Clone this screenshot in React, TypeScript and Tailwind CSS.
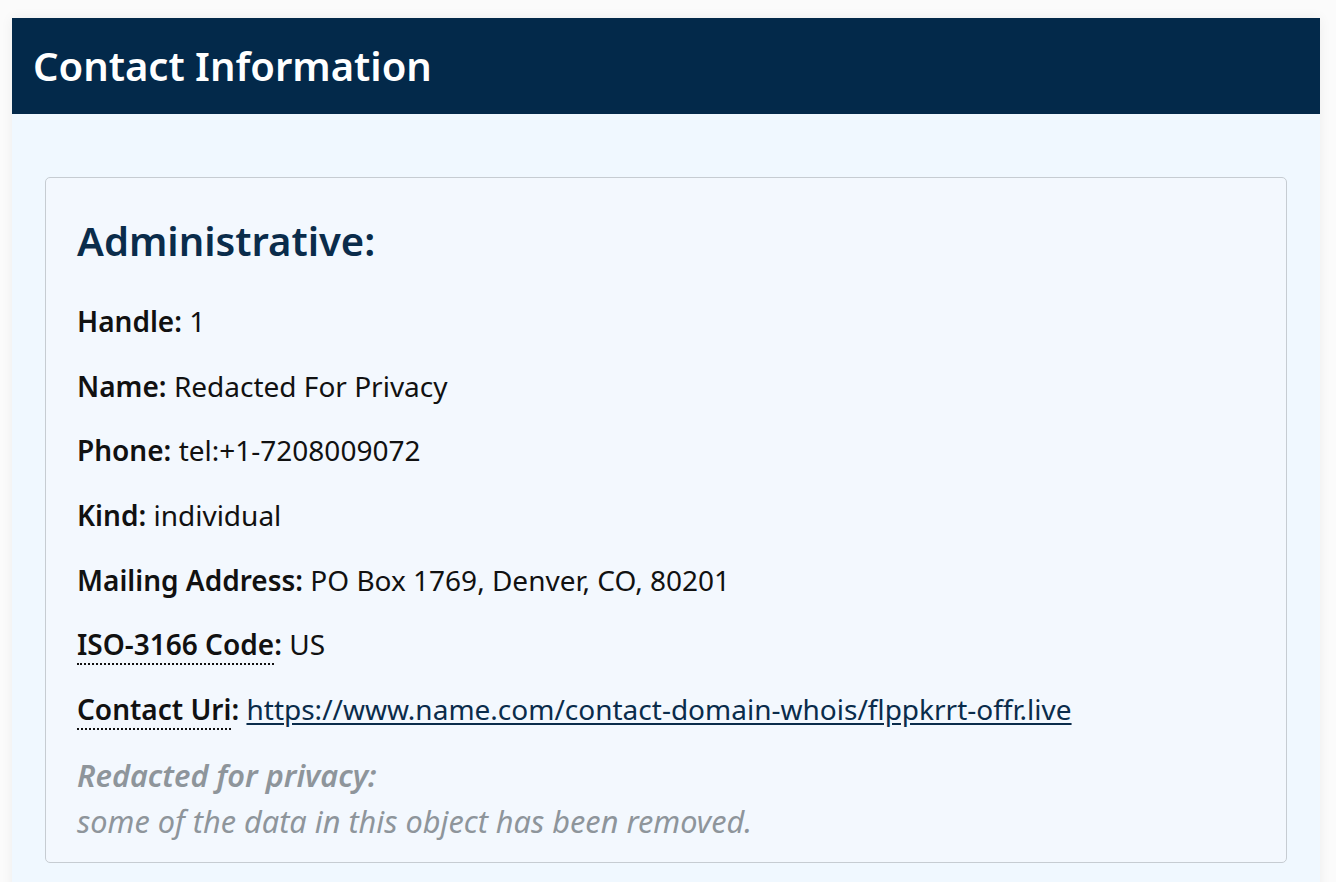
const FONT = "font-['Noto_Sans',sans-serif]";

type Row = { label: string; value: string; abbr?: boolean; href?: boolean };

const ROWS: Row[] = [
  { label: "Handle", value: "1" },
  { label: "Name", value: "Redacted For Privacy" },
  { label: "Phone", value: "tel:+1-7208009072" },
  { label: "Kind", value: "individual" },
  { label: "Mailing Address", value: "PO Box 1769, Denver, CO, 80201" },
  { label: "ISO-3166 Code", value: "US", abbr: true },
  {
    label: "Contact Uri",
    value: "https://www.name.com/contact-domain-whois/flppkrrt-offr.live",
    abbr: true,
    href: true,
  },
];

export default function App() {
  return (
    <div className={`min-h-screen bg-[#fbfbfb] pt-[18px] ${FONT}`}>
      <div className="ml-[12px] w-[1308px] shadow-[0_0_12px_rgba(0,0,0,0.06)]">
        {/* Header */}
        <div className="h-[96px] bg-[#03294a] px-[21px] flex items-center">
          <h1 className="text-[40px] font-semibold text-white leading-none">
            Contact Information
          </h1>
        </div>

        {/* Body */}
        <div className="bg-[#f0f8ff] pt-[63px] px-[33px] pb-[40px]">
          <div className="border-[1.5px] border-[#c6ccd2] rounded-[5px] bg-[#f3f8fe] px-[31px] pt-[42px] pb-[21px]">
            <h2 className="text-[40px] font-semibold text-[#0a2c4b] leading-[41px]">
              Administrative:
            </h2>

            <div className="mt-[40px] flex flex-col gap-[24.7px] text-[28px] leading-[40px] text-[#111]">
              {ROWS.map((row) => (
                <div key={row.label}>
                  <strong className="font-semibold">
                    {row.abbr ? (
                      <abbr className="no-underline border-b-2 border-dotted border-[#111]">
                        {row.label}
                      </abbr>
                    ) : (
                      row.label
                    )}
                    :
                  </strong>{" "}
                  {row.href ? (
                    <a href="#" className="text-[#0a2c4b] underline underline-offset-[3px]">
                      {row.value}
                    </a>
                  ) : (
                    row.value
                  )}
                </div>
              ))}
            </div>

            {/* Redaction notice */}
            <div className="mt-[26px] text-[30.7px] leading-[40px] italic text-[#8e959b]">
              <div className="font-semibold">Redacted for privacy:</div>
              <div className="mt-[6px]">some of the data in this object has been removed.</div>
            </div>
          </div>
        </div>
      </div>
    </div>
  );
}
